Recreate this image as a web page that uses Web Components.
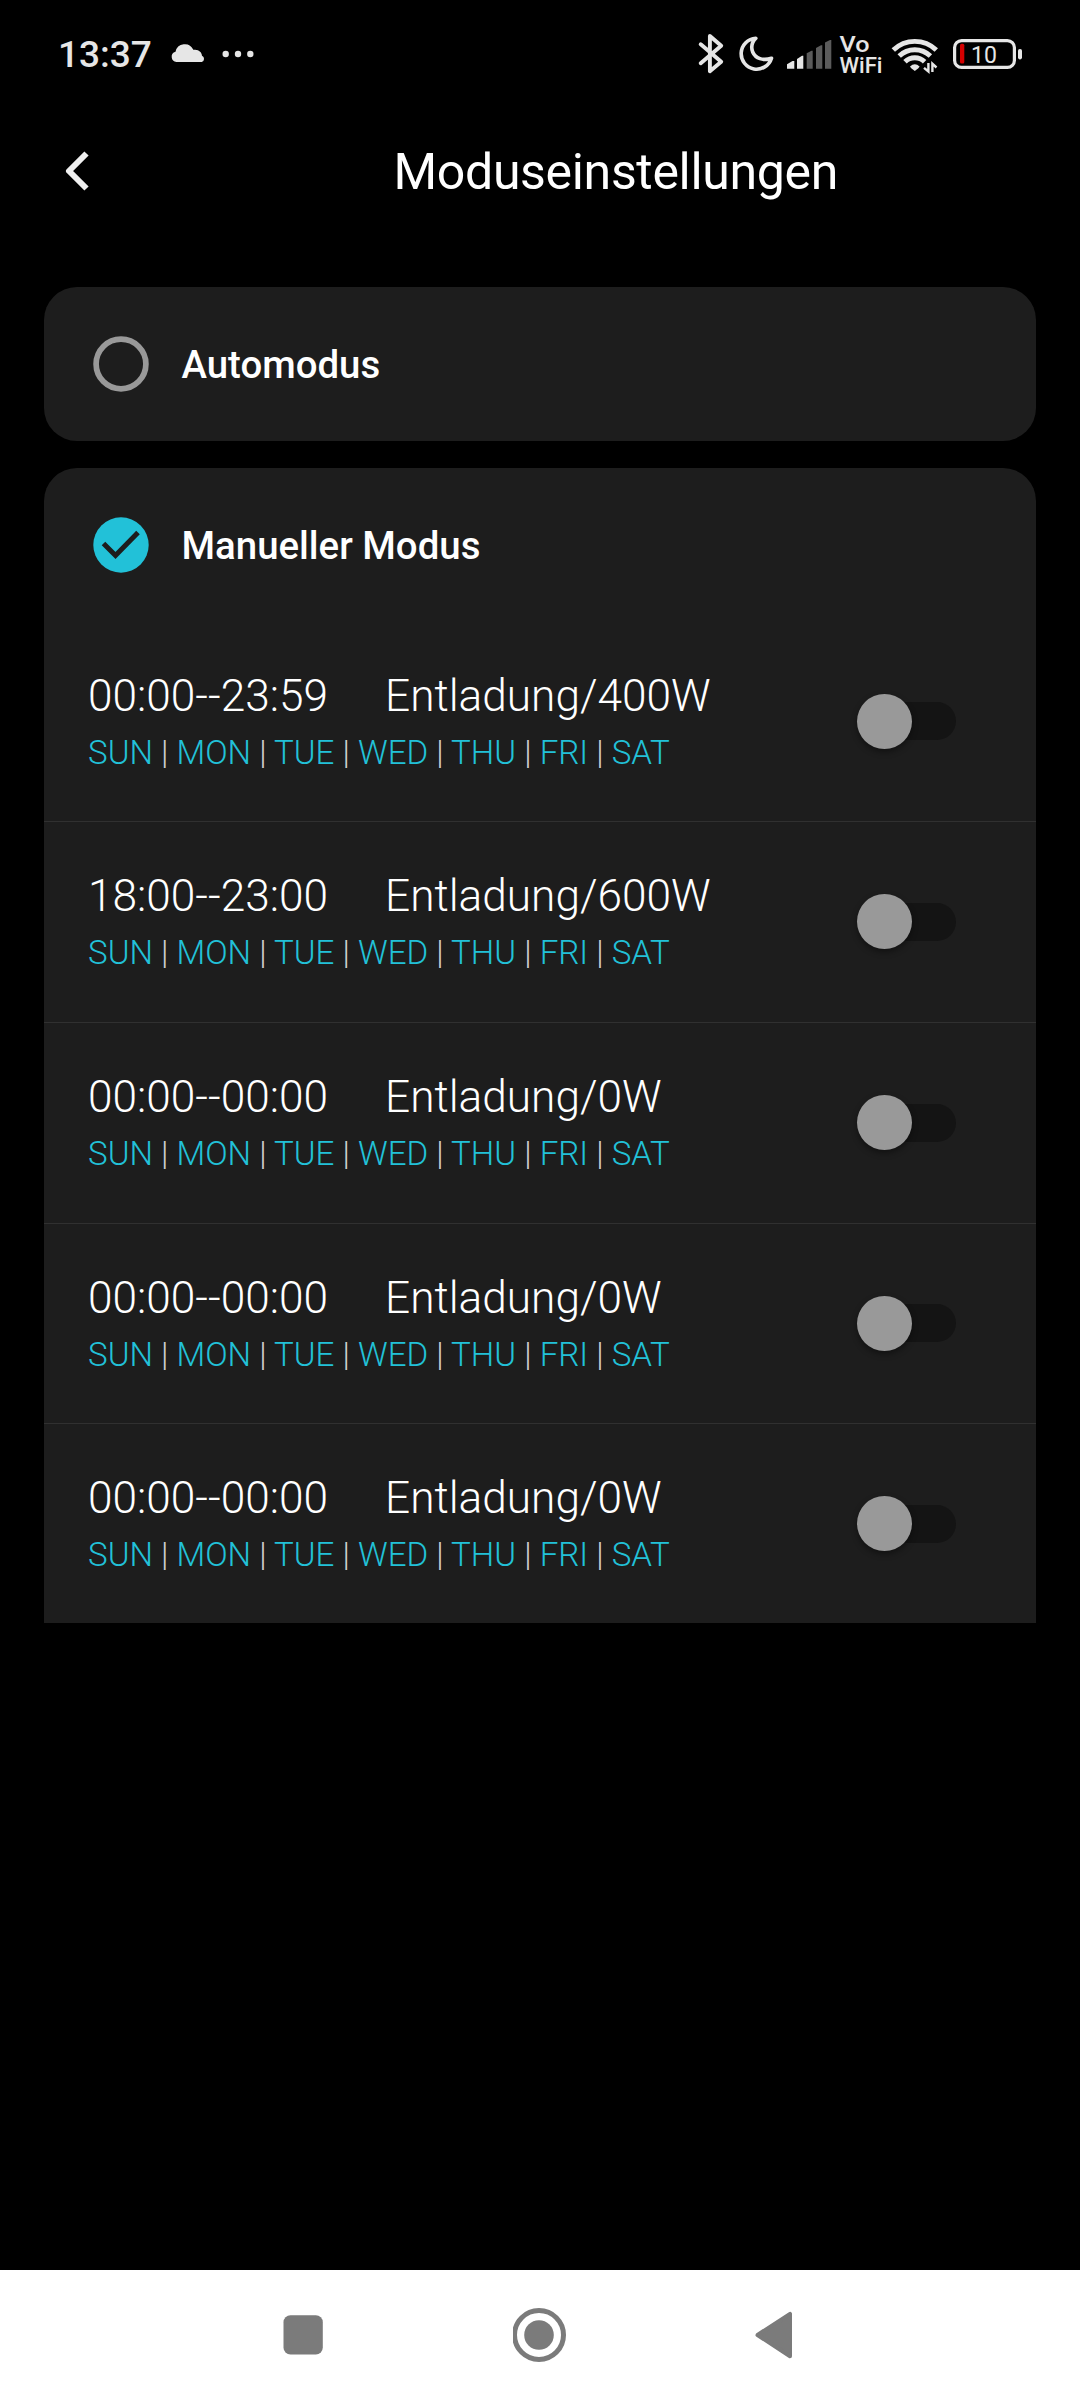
<!DOCTYPE html>
<html lang="de">
<head>
<meta charset="UTF-8">
<title>Moduseinstellungen</title>
<style>
    body {
        margin: 0;
        background: #000;
        color: #fff;
        font-family: Roboto, "Noto Sans", sans-serif;
    }
</style>
</head>
<body>
<mode-screen>
    <status-bar slot="status" time="13:37" battery="10"></status-bar>
    <app-header slot="header">Moduseinstellungen</app-header>
    <mode-card label="Automodus"></mode-card>
    <mode-card label="Manueller Modus" selected>
        <schedule-row from="00:00" to="23:59" power="400"></schedule-row>
        <schedule-row from="18:00" to="23:00" power="600"></schedule-row>
        <schedule-row from="00:00" to="00:00" power="0"></schedule-row>
        <schedule-row from="00:00" to="00:00" power="0"></schedule-row>
        <schedule-row from="00:00" to="00:00" power="0"></schedule-row>
    </mode-card>
    <nav-bar slot="nav"></nav-bar>
</mode-screen>

<script>
// Base class: opens the shadow root and fills it once
class BaseElement extends HTMLElement {
    constructor() {
        super();
        this.attachShadow({ mode: 'open' });
    }

    connectedCallback() {
        this.shadowRoot.innerHTML = this.template();
    }
}

class ModeScreen extends BaseElement {
    template() {
        return `
            <style>
                :host {
                    display: flex;
                    flex-direction: column;
                    width: 1080px;
                    height: 2400px;
                    overflow: hidden;
                    background: #000;
                }
                main {
                    flex: 1;
                    display: flex;
                    flex-direction: column;
                    gap: 27px;
                    padding: 57px 44px 0;
                }
            </style>
            <slot name="status"></slot>
            <slot name="header"></slot>
            <main><slot></slot></main>
            <slot name="nav"></slot>
        `;
    }
}

class StatusBar extends BaseElement {
    template() {
        return `
            <style>
                :host {
                    display: flex;
                    justify-content: space-between;
                    height: 110px;
                    padding: 0 58px;
                    box-sizing: border-box;
                    color: #e6e6e6;
                }
                .left { display: flex; }
                .time {
                    font-size: 37px;
                    font-weight: 500;
                    line-height: 44px;
                    padding-top: 33px;
                    width: 112px;
                    white-space: nowrap;
                }
                svg { display: block; }
                text { font-family: Roboto, "Noto Sans", sans-serif; fill: #e6e6e6; }
            </style>
            <div class="left">
                <div class="time">${this.getAttribute('time')}</div>
                <svg width="90" height="110" viewBox="170 0 90 110" fill="#e6e6e6">
                    <path d="M176.500 62a5.200 5.200 0 0 1-1-10.200A9.400 9.400 0 0 1 193.300 49.800C198.500 48.800 202 52.300 202 55.800A3.300 3.300 0 0 1 201.700 62Z"/>
                    <circle cx="225.700" cy="54" r="3.200"/>
                    <circle cx="238" cy="54" r="3.200"/>
                    <circle cx="250.300" cy="54" r="3.200"/>
                </svg>
            </div>
            <svg width="332" height="110" viewBox="690 0 332 110" fill="none">
                <!-- bluetooth -->
                <path d="M700.700 44.200 721.200 61.800 709.900 71.200V36L721.200 45.800 700.700 63.200" stroke="#e6e6e6" stroke-width="3.900" stroke-linecap="round" stroke-linejoin="round"/>
                <!-- do not disturb -->
                <path d="M755.800 38.200A15.500 15.500 0 1 0 771.500 58.200C763 61 755.500 58.500 752.800 52.300C750.700 47 752 42 755.800 38.200Z" stroke="#e6e6e6" stroke-width="3.600" stroke-linejoin="round"/>
                <!-- signal -->
                <g fill="#e6e6e6">
                    <path d="M787 68.700V64.200L792.500 61H794.300V68.700Z"/>
                    <path d="M797 68.700V59L802 55.700H803.300V68.700Z"/>
                </g>
                <g fill="#5b5b5b">
                    <path d="M806.700 68.700V53.300L811.500 50.700H812.700V68.700Z"/>
                    <path d="M816 68.700V48L821 45.300H822.300V68.700Z"/>
                    <path d="M825 68.700V42.600L830 40H831.300V68.700Z"/>
                </g>
                <text x="839.500" y="52" font-size="22.500" font-weight="500" textLength="30" lengthAdjust="spacingAndGlyphs">Vo</text>
                <text x="839.500" y="73" font-size="22" font-weight="500" textLength="43" lengthAdjust="spacingAndGlyphs">WiFi</text>
                <!-- wifi -->
                <g stroke="#e6e6e6" stroke-width="4.900">
                    <path d="M893.300 50A31 31 0 0 1 936.300 50"/>
                    <path d="M899.200 56A22.500 22.500 0 0 1 930.400 56"/>
                    <path d="M905 61.800A14 14 0 0 1 924.600 61.800"/>
                </g>
                <path d="M910 66.500Q914.800 61.800 919.600 66.500Q919 68 914.800 71Q910.600 68 910 66.500Z" fill="#e6e6e6"/>
                <path d="M928.400 63V71.500L924 67.800M932.400 72V63.800L936.500 67.500" stroke="#e6e6e6" stroke-width="2.400"/>
                <!-- battery -->
                <rect x="954.600" y="40.600" width="59.800" height="26.800" rx="7" stroke="#e6e6e6" stroke-width="3.200"/>
                <rect x="960" y="43.800" width="4.300" height="19.700" rx="1.500" fill="#d40000"/>
                <rect x="1018" y="49" width="4" height="10.400" rx="1.800" fill="#e6e6e6"/>
                <text x="971" y="63" font-size="23" font-weight="400">${this.getAttribute('battery')}</text>
            </svg>
        `;
    }
}

class AppHeader extends BaseElement {
    template() {
        return `
            <style>
                :host {
                    display: flex;
                    align-items: center;
                    height: 120px;
                    padding-left: 60px;
                }
                svg { width: 34px; height: 44px; flex: none; }
                h1 {
                    margin: 4px 0 0 299.500px;
                    font-size: 50px;
                    font-weight: 400;
                    letter-spacing: -.33px;
                    line-height: 60px;
                    white-space: nowrap;
                }
            </style>
            <svg viewBox="0 0 34 44" fill="none" stroke="#f0f0f0" stroke-width="6">
                <path d="M26.500 5.500 9 23 26.500 40.500" stroke-linejoin="round"/>
            </svg>
            <h1><slot></slot></h1>
        `;
    }
}

class ModeCard extends BaseElement {
    template() {
        const selected = this.hasAttribute('selected');
        const icon = selected
            ? `<circle cx="28" cy="28" r="27.700" fill="#22c1d8"/>
               <path d="M10.500 26.500 22.500 38.500 45 15.500" stroke="#1d1d1d" stroke-width="5"/>`
            : '<circle cx="28" cy="28" r="24.900" stroke="#999" stroke-width="5.700"/>';
        return `
            <style>
                :host {
                    display: block;
                    background: #1d1d1d;
                    border-radius: ${selected ? '33px 33px 0 0' : '33px'};
                }
                .head {
                    display: flex;
                    align-items: center;
                    gap: 32.500px;
                    height: ${selected ? '153.200px' : '154px'};
                    padding-left: 49px;
                    font-size: 38.400px;
                    font-weight: 500;
                }
                .head span { padding-top: 1px; }
                svg { width: 56px; height: 56px; flex: none; }
            </style>
            <div class="head">
                <svg viewBox="0 0 56 56" fill="none">${icon}</svg>
                <span>${this.getAttribute('label')}</span>
            </div>
            <slot></slot>
        `;
    }
}

class ScheduleRow extends BaseElement {
    template() {
        const days = ['SUN', 'MON', 'TUE', 'WED', 'THU', 'FRI', 'SAT'].join(' <i>|</i> ');
        return `
            <style>
                :host {
                    display: flex;
                    justify-content: space-between;
                    align-items: center;
                    height: 200.800px;
                    padding: 0 80px 0 44px;
                    box-sizing: border-box;
                    border-bottom: 1px solid #303030;
                    font-weight: 300;
                    white-space: nowrap;
                }
                :host(:last-of-type) {
                    height: 198.600px;
                    border-bottom: 0;
                }
                .line {
                    display: flex;
                    font-size: 44.200px;
                    line-height: 54px;
                }
                .time { width: 297px; }
                .days {
                    margin-top: 9px;
                    font-size: 33.150px;
                    line-height: 42px;
                    color: #22c1d8;
                }
                i { font-style: normal; color: #d0d0d0; }
            </style>
            <div>
                <div class="line">
                    <span class="time">${this.getAttribute('from')}--${this.getAttribute('to')}</span>
                    <span>Entladung/${this.getAttribute('power')}W</span>
                </div>
                <div class="days">${days}</div>
            </div>
            <toggle-switch></toggle-switch>
        `;
    }
}

class ToggleSwitch extends BaseElement {
    template() {
        return `
            <style>
                :host {
                    display: flex;
                    align-items: center;
                    width: 94px;
                    height: 38px;
                    border-radius: 19px;
                    background: #141414;
                }
                .thumb {
                    width: 55px;
                    height: 55px;
                    margin-left: -5px;
                    border-radius: 50%;
                    background: #999;
                    box-shadow: 0 3px 6px rgba(0, 0, 0, .4);
                }
            </style>
            <div class="thumb"></div>
        `;
    }
}

class NavBar extends BaseElement {
    template() {
        return `
            <style>
                :host {
                    display: flex;
                    justify-content: space-between;
                    align-items: center;
                    height: 130px;
                    padding: 0 276px;
                    box-sizing: border-box;
                    background: #fff;
                }
                svg { width: 54px; height: 54px; }
            </style>
            <svg viewBox="276 2308 54 54"><rect x="283.500" y="2315.300" width="39.300" height="39.300" rx="7" fill="#7b7b7b"/></svg>
            <svg viewBox="513 2308 54 54">
                <circle cx="539" cy="2335" r="24.500" fill="none" stroke="#7b7b7b" stroke-width="5"/>
                <circle cx="539" cy="2335" r="14.800" fill="#7b7b7b"/>
            </svg>
            <svg viewBox="750 2308 54 54"><path d="M757.500 2335 790 2313.800V2356.200Z" fill="#7b7b7b" stroke="#7b7b7b" stroke-width="4" stroke-linejoin="round"/></svg>
        `;
    }
}

customElements.define('mode-screen', ModeScreen);
customElements.define('status-bar', StatusBar);
customElements.define('app-header', AppHeader);
customElements.define('mode-card', ModeCard);
customElements.define('schedule-row', ScheduleRow);
customElements.define('toggle-switch', ToggleSwitch);
customElements.define('nav-bar', NavBar);
</script>
</body>
</html>
